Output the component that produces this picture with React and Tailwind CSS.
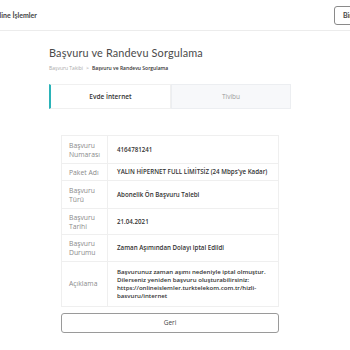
const rows = [
  { label: ["Başvuru", "Numarası"], value: "4164781241", h: "h-[28px]" },
  { label: ["Paket Adı"], value: "YALIN HİPERNET FULL LİMİTSİZ (24 Mbps'ye Kadar)", h: "h-[17px]" },
  { label: ["Başvuru", "Türü"], value: "Abonelik Ön Başvuru Talebi", h: "h-[28px]" },
  { label: ["Başvuru", "Tarihi"], value: "21.04.2021", h: "h-[26px]" },
  { label: ["Başvuru", "Durumu"], value: "Zaman Aşımından Dolayı iptal Edildi", h: "h-[27px]" },
];

export default function App() {
  return (
    <div className="w-[350px] h-[350px] overflow-hidden bg-white font-['Open_Sans',sans-serif] text-[#333]">
      {/* Üst bar */}
      <div className="h-[31px] flex items-center justify-between border-b border-[#ececec]">
        <span className="ml-[-10px] font-['Lato',sans-serif] text-[7px] font-bold text-[#444]">Online İşlemler</span>
        <div className="mr-[-34px] w-[50px] h-[19px] px-[8px] flex items-center border border-[#8a8a8a] rounded-[3px] font-['Lato',sans-serif] text-[7px] font-bold text-[#444]">
          Bireysel
        </div>
      </div>

      <div className="ml-[49px] w-[242px] pt-[15px]">
        <h1 className="font-['Lato',sans-serif] text-[10.9px] leading-[14px] text-[#4a4a4a] tracking-[0.15px]">
          Başvuru ve Randevu Sorgulama
        </h1>
        <div className="mt-[5px] flex items-center gap-[3px] text-[5px] leading-[7px]">
          <span className="text-[#aaa]">Başvuru Takibi</span>
          <span className="text-[#999]">&gt;</span>
          <span className="font-semibold text-[#333]">Başvuru ve Randevu Sorgulama</span>
        </div>

        {/* Sekmeler */}
        <div className="mt-[12px] flex h-[25px]">
          <div className="w-[122px] flex items-center justify-center border-l-2 border-[#2bb3b8] bg-white border-y border-r border-y-[#f0f0f0] border-r-[#f0f0f0] text-[6.5px] font-semibold text-[#333]">
            Evde İnternet
          </div>
          <div className="flex-1 flex items-center justify-center bg-[#f7f8fa] border border-[#eceef1] text-[6.5px] text-[#999]">
            Tivibu
          </div>
        </div>

        {/* Tablo */}
        <div className="mt-[26px] ml-[12px] w-[218px] border border-[#efefef]">
          {rows.map((r, i) => (
            <div key={i} className={`flex ${r.h} border-b border-[#efefef]`}>
              <div className="w-[46px] shrink-0 border-r border-[#efefef] pl-[7px] flex flex-col justify-center text-[6.8px] leading-[9px] text-[#8a8a8a]">
                {r.label.map((l) => (
                  <span key={l}>{l}</span>
                ))}
              </div>
              <div className="flex-1 pl-[9px] flex items-center text-[6.2px] font-semibold text-[#333]">{r.value}</div>
            </div>
          ))}
          <div className="flex h-[44px]">
            <div className="w-[46px] shrink-0 border-r border-[#efefef] pl-[7px] flex items-center text-[6.8px] text-[#8a8a8a]">
              Açıklama
            </div>
            <div className="flex-1 pl-[9px] flex items-center text-[6.1px] leading-[8px] font-semibold text-[#333]">
              <p>
                Başvurunuz zaman aşımı nedeniyle iptal olmuştur.
                <br />
                Dilerseniz yeniden başvuru oluşturabilirsiniz:
                <br />
                https://onlineislemler.turktelekom.com.tr/hizli-
                <br />
                basvuru/internet
              </p>
            </div>
          </div>
        </div>

        <button className="mt-[6px] ml-[12px] w-[218px] h-[20px] border border-[#9a9a9a] rounded-[3px] text-[6.5px] text-[#444]">
          Geri
        </button>
      </div>
    </div>
  );
}
